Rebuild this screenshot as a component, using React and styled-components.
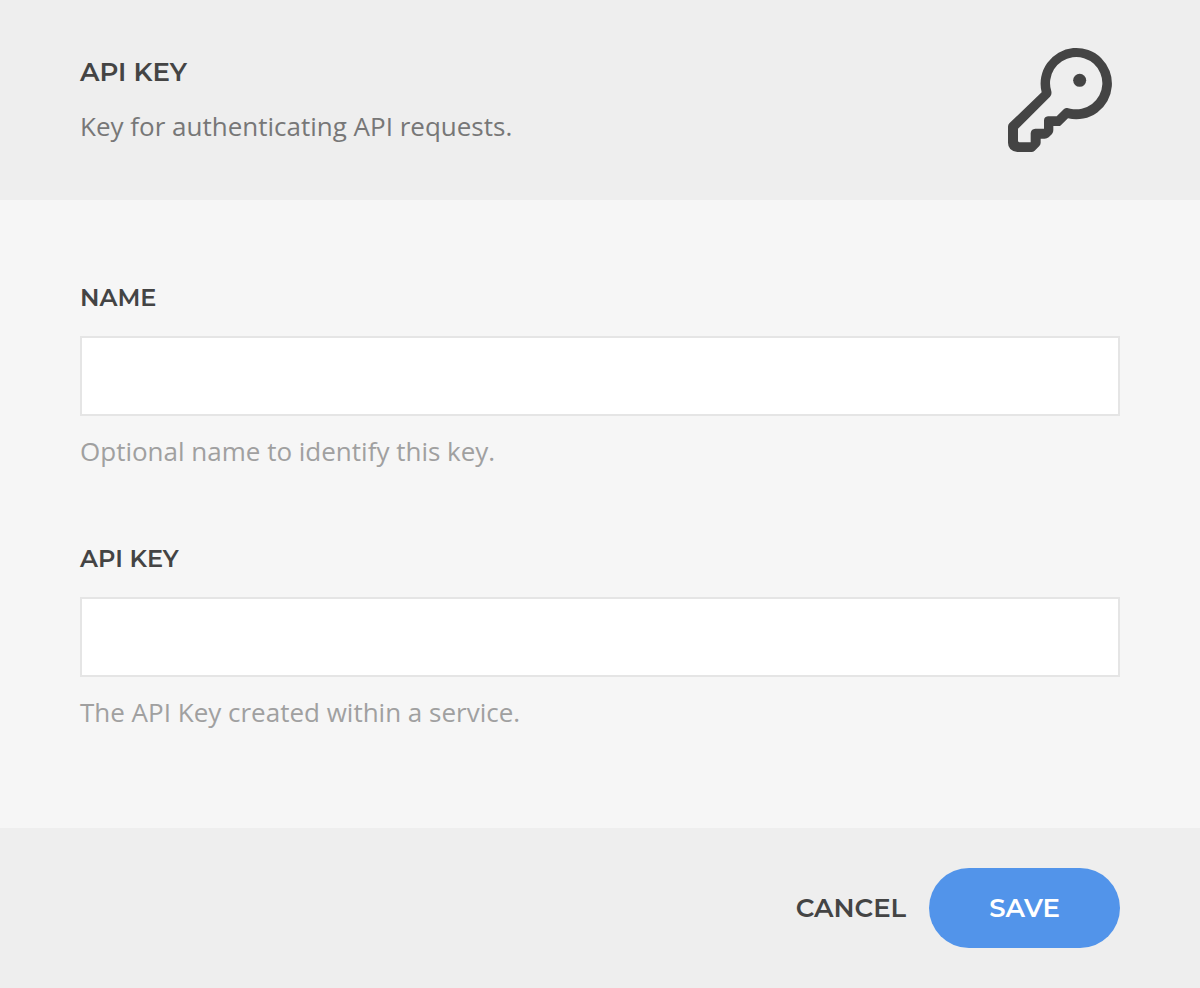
import React from "react";
import styled, { createGlobalStyle } from "styled-components";

const GlobalStyle = createGlobalStyle`
  *, *::before, *::after { box-sizing: border-box; }
  body {
    margin: 0;
    background: #f6f6f6;
    color: #444444;
    font-family: "Open Sans", "Noto Sans", sans-serif;
    font-size: 26px;
    line-height: 40px;
  }
`;

const headingFont = `Montserrat, Inter, sans-serif`;

const Header = styled.header`
  display: flex;
  align-items: center;
  justify-content: space-between;
  gap: 40px;
  padding: 40px 80px;
  background: #eeeeee;
`;

const Heading = styled.div`
  display: flex;
  flex-direction: column;
  gap: 16px;
`;

const Title = styled.h1`
  margin: 0;
  font: 600 26px/36px ${headingFont};
`;

const Description = styled.p`
  margin: 0;
  color: #777777;
`;

const KeyDrawing = styled.svg`
  flex: none;
  width: 120px;
  height: 120px;
`;

const Fields = styled.div`
  display: flex;
  flex-direction: column;
  gap: 70px;
  padding: 80px 80px 96px;
`;

const Field = styled.div`
  display: flex;
  flex-direction: column;
`;

const Label = styled.label`
  margin-bottom: 20px;
  font: 600 24px/36px ${headingFont};
`;

const TextInput = styled.input`
  width: 100%;
  height: 80px;
  padding: 0 20px;
  border: 2px solid #e5e5e5;
  border-radius: 0;
  background: #ffffff;
  color: inherit;
  font: inherit;
  outline: none;

  &:focus { border-color: #5294ea; }
`;

const Hint = styled.p`
  margin: 15px 0 0;
  color: #a0a0a0;
`;

const Footer = styled.footer`
  display: flex;
  align-items: center;
  justify-content: flex-end;
  gap: 23px;
  padding: 40px 80px;
  background: #eeeeee;
`;

const Button = styled.button`
  height: 80px;
  padding: ${({ $primary }) => ($primary ? "0 60px" : "0")};
  border: 0;
  border-radius: 40px;
  background: ${({ $primary }) => ($primary ? "#5294ea" : "transparent")};
  color: ${({ $primary }) => ($primary ? "#ffffff" : "#444444")};
  font: 600 26px/36px ${headingFont};
  cursor: pointer;
`;

function KeyIcon() {
  return (
    <KeyDrawing viewBox="0 0 360 360" fill="#444444" aria-hidden="true">
      <path
        fillRule="evenodd"
        d="M125 157 A107 107 0 1 1 204 235 L181 257 Q180 258 174 258 H160 V270 Q160 278 156 282 L146 292 Q141 296 134 296 H122 V308 Q122 314 118 318 L104 332 Q100 336 94 336 H52 Q24 332 24 308 V260 Q24 254 28 250 Z
           M154 154 A78.5 78.5 0 1 1 211 206 L202 204 Q197 203 192 207 L170 229 H144 Q132 230 132 242 V266 H106 Q93 267 92 280 V307 H58 Q54 306 54 302 V266 L150 170 Q156 164 154 154 Z"
      />
      <circle cx="239" cy="121" r="19.5" />
    </KeyDrawing>
  );
}

function TextField({ id, label, hint }) {
  return (
    <Field>
      <Label htmlFor={id}>{label}</Label>
      <TextInput id={id} name={id} type="text" aria-describedby={`${id}-hint`} />
      <Hint id={`${id}-hint`}>{hint}</Hint>
    </Field>
  );
}

export default function App() {
  return (
    <>
      <GlobalStyle />
      <Header>
        <Heading>
          <Title>API KEY</Title>
          <Description>Key for authenticating API requests.</Description>
        </Heading>
        <KeyIcon />
      </Header>
      <form onSubmit={(event) => event.preventDefault()}>
        <Fields>
          <TextField id="name" label="NAME" hint="Optional name to identify this key." />
          <TextField id="api-key" label="API KEY" hint="The API Key created within a service." />
        </Fields>
        <Footer>
          <Button type="button">CANCEL</Button>
          <Button type="submit" $primary>SAVE</Button>
        </Footer>
      </form>
    </>
  );
}
